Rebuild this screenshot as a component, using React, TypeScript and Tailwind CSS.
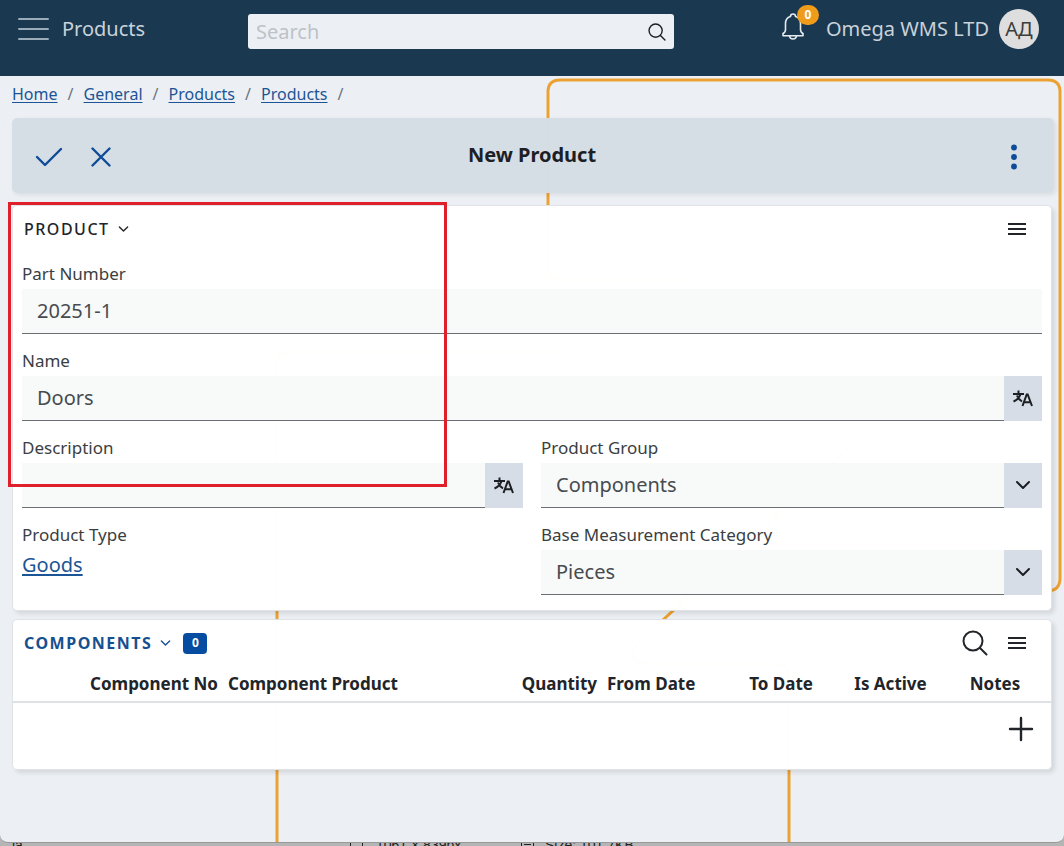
import React from "react";

const stroke = { fill: "none", stroke: "currentColor", strokeLinecap: "round", strokeLinejoin: "round" } as const;

function SearchIcon({ className }: { className: string }) {
  return (
    <svg viewBox="0 0 26 26" className={className} {...stroke} strokeWidth="2" aria-hidden="true">
      <circle cx="11" cy="11" r="9.5" />
      <path d="M18 18l6.5 6.5" />
    </svg>
  );
}

function Chevron({ className }: { className: string }) {
  return (
    <svg viewBox="0 0 16 10" className={className} {...stroke} strokeWidth="2" aria-hidden="true">
      <path d="M2 2l6 6 6-6" />
    </svg>
  );
}

function MenuLines() {
  return (
    <svg viewBox="0 0 18 12" className="h-3 w-[18px]" stroke="currentColor" strokeWidth="2" aria-hidden="true">
      <path d="M0 1h18M0 6h18M0 11h18" />
    </svg>
  );
}

function TranslateIcon() {
  return (
    <svg viewBox="0 0 20 17" className="h-[17px] w-5" fill="none" stroke="currentColor" strokeWidth="2" aria-hidden="true">
      <path d="M0 4h11M5.500 0.500v3.500M7.500 4c-1 3.500-3.500 6-7 7.500M4 5.500c1 2.500 2.500 4.500 5 6" />
      <path d="M9.500 16L13.700 4.500h1L19 16M11 12.200h6.500" />
    </svg>
  );
}

function Backdrop() {
  return (
    <svg className="pointer-events-none absolute left-0 top-0 h-full w-full text-[#eda133]" fill="none" stroke="currentColor" strokeWidth="3" aria-hidden="true">
      <path d="M700 204H560q-12 0-12-12V16q0-12 12-12h488q12 0 12 12v486q0 13-13 13H860" />
      <path d="M857 365L637 568q-12 20 12 20H777q12 0 12 12v600" />
      <path d="M560 276H289q-12 0-12 12v900" />
    </svg>
  );
}

const labelText = "block pt-px text-[17px] leading-[30px] text-[#3a3e42]";
const box = "flex h-[45px] bg-[#f8faf9]";
const control = "h-full w-full min-w-0 flex-1 appearance-none rounded-none border-b border-[#6b6f73] bg-transparent px-[15px] text-xl text-[#474b4f] outline-none";
const addon = "flex w-[38px] shrink-0 items-center justify-center bg-[#d6dde6] text-[#1c1f22]";

function TextField({ id, label, value, translate }: { id: string; label: string; value: string; translate?: boolean }) {
  return (
    <div>
      <label htmlFor={id} className={labelText}>{label}</label>
      <div className={box}>
        <input id={id} type="text" defaultValue={value} className={`pb-[2px] ${control}`} />
        {translate && (
          <button type="button" aria-label="Translate" className={addon}><TranslateIcon /></button>
        )}
      </div>
    </div>
  );
}

function SelectField({ id, label, value }: { id: string; label: string; value: string }) {
  return (
    <div>
      <label htmlFor={id} className={labelText}>{label}</label>
      <div className={box}>
        <select id={id} defaultValue={value} className={control}>
          <option>{value}</option>
        </select>
        <span className={`pb-[2px] ${addon}`}><Chevron className="h-[10px] w-4" /></span>
      </div>
    </div>
  );
}

const crumbs = ["Home", "General", "Products", "Products"];
const card = "rounded-[5px] border border-[#dfe2e6] bg-white/99 shadow-[3px_3px_4px_rgba(0,0,0,0.1)]";

export default function App() {
  return (
    <div className="flex min-h-screen flex-col bg-[#b5b5b5] font-['Noto_Sans',sans-serif] text-[#212529]">
      <div className="flex flex-1 flex-col overflow-hidden rounded-b-lg border-b border-[#999] bg-[#ecf0f4]">
        <header className="flex h-[76px] items-start bg-[#1a3850] text-[#c9d2da]">
          <div className="flex h-[58px] w-[248px] items-center gap-[13px] pl-[18px]">
            <button type="button" aria-label="Menu">
              <svg viewBox="0 0 31 24" className="h-6 w-[31px] text-[#9aabb9]" {...stroke} strokeWidth="2" aria-hidden="true">
                <path d="M1 2h29M1 12h29M1 22h29" />
              </svg>
            </button>
            <span className="text-xl">Products</span>
          </div>
          <div className="mt-[14px] flex h-[35px] w-2/5 items-center rounded-[3px] bg-[#ecf0f5] pl-2 pr-2">
            <input type="search" aria-label="Search" placeholder="Search" className="h-full min-w-0 flex-1 bg-transparent text-xl text-[#212529] outline-none placeholder:text-[#bcc2c8]" />
            <button type="button" aria-label="Run search" className="text-[#1c1f22]"><SearchIcon className="h-[18px] w-[18px]" /></button>
          </div>
          <div className="ml-auto flex h-[58px] items-center pr-[25px]">
            <button type="button" aria-label="Notifications" className="relative mb-[6px] mr-[22px] text-[#e6ebef]">
              <svg viewBox="0 0 22 27" className="h-[27px] w-[22px]" {...stroke} strokeWidth="1.600" aria-hidden="true">
                <path d="M8.500 3.500a2.500 2.500 0 0 1 5 0c3.500 1 5 3.500 5 7v6c0 2 .8 3.200 2.500 4v2.300H1v-2.300c1.700-.8 2.500-2 2.500-4v-6c0-3.500 1.500-6 5-7z" />
                <path d="M7.500 23c.5 4 6.500 4 7 0" />
              </svg>
              <span className="absolute -top-2 left-[15px] flex h-5 w-[22px] items-center justify-center rounded-full bg-[#f09c1b] text-xs font-bold text-white">0</span>
            </button>
            <span className="mr-[10px] text-xl">Omega WMS LTD</span>
            <span className="flex h-10 w-10 items-center justify-center rounded-full bg-[#dedede] text-xl text-[#3c3c3c]">АД</span>
          </div>
        </header>

        <div className="relative flex-1">
          <Backdrop />
          <main className="relative px-3 pb-6">
            <nav aria-label="Breadcrumb" className="flex h-[42px] items-start pt-[6px] text-base text-[#1c5596]">
              {crumbs.map((c, i) => (
                <span key={i} className="flex">
                  <a href="#" className="underline underline-offset-2">{c}</a>
                  <span className="w-[26px] text-center text-[#6c757d]">/</span>
                </span>
              ))}
            </nav>

            <div className="-mr-[2px] flex h-[75px] items-center rounded-[5px] bg-[#d6dee5]/99 text-[#0d4c97] shadow-[2px_2px_4px_rgba(0,0,0,0.08)]">
              <div className="flex flex-1 items-center gap-[28px] pl-[23px] pt-[2px]">
                <button type="button" aria-label="Save">
                  <svg viewBox="0 0 28 20" className="h-5 w-7" {...stroke} strokeWidth="2.400" aria-hidden="true"><path d="M2 10l8 8L26 2" /></svg>
                </button>
                <button type="button" aria-label="Cancel">
                  <svg viewBox="0 0 20 20" className="h-5 w-5" {...stroke} strokeWidth="2.400" aria-hidden="true"><path d="M1.500 1.500l17 17M18.500 1.500l-17 17" /></svg>
                </button>
              </div>
              <h1 className="pb-[2px] pl-3 text-xl font-bold text-[#1c2024]">New Product</h1>
              <div className="flex flex-1 justify-end pr-[37px] pt-[2px]">
                <button type="button" aria-label="More actions">
                  <svg viewBox="0 0 6 26" className="h-[26px] w-[6px]" fill="currentColor" aria-hidden="true">
                    <circle cx="3" cy="3.500" r="2.900" /><circle cx="3" cy="13" r="2.900" /><circle cx="3" cy="22.500" r="2.900" />
                  </svg>
                </button>
              </div>
            </div>

            <section className={`relative mt-3 px-[9px] pb-[15px] ${card}`}>
              <div className="flex h-[52px] items-center justify-between pb-[6px] pl-[2px] pr-4">
                <button type="button" className="flex items-center gap-2 text-base font-medium tracking-[1.5px]">
                  PRODUCT <Chevron className="h-2 w-[11px]" />
                </button>
                <button type="button" aria-label="Product menu"><MenuLines /></button>
              </div>
              <div className="flex flex-col gap-[11px]">
                <TextField id="part" label="Part Number" value="20251-1" />
                <TextField id="name" label="Name" value="Doors" translate />
                <div className="grid grid-cols-2 gap-x-[18px] gap-y-[11px]">
                  <TextField id="description" label="Description" value="" translate />
                  <SelectField id="group" label="Product Group" value="Components" />
                  <div>
                    <span className={labelText}>Product Type</span>
                    <a href="#" className="text-xl leading-[30px] text-[#1c5596] underline underline-offset-2">Goods</a>
                  </div>
                  <SelectField id="category" label="Base Measurement Category" value="Pieces" />
                </div>
              </div>
              <div className="pointer-events-none absolute -left-[5px] -top-1 h-[285px] w-[439px] border-3 border-[#df1f29]" />
            </section>

            <section className={`mt-2 ${card}`}>
              <div className="flex h-[46px] items-center justify-between pl-[11px] pr-[25px]">
                <button type="button" className="flex items-center gap-2 text-base font-bold tracking-[1.5px] text-[#17508f]">
                  COMPONENTS <Chevron className="h-2 w-[11px]" />
                  <span className="ml-1 flex h-[21px] w-6 items-center justify-center rounded bg-[#064da2] text-xs tracking-normal text-white">0</span>
                </button>
                <div className="flex items-center gap-5">
                  <button type="button" aria-label="Search components"><SearchIcon className="h-[26px] w-[26px]" /></button>
                  <button type="button" aria-label="Components menu"><MenuLines /></button>
                </div>
              </div>
              <table className="w-full table-fixed text-[17px]">
                <thead>
                  <tr className="h-9 whitespace-nowrap border-b-2 border-[#dee2e6] align-middle">
                    <th className="w-[210px] pr-[5px] text-right font-bold">Component No</th>
                    <th className="pl-[5px] text-left font-bold">Component Product</th>
                    <th className="w-[125px] pr-[5px] text-right font-bold">Quantity</th>
                    <th className="w-[112px] pl-[5px] text-left font-bold">From Date</th>
                    <th className="w-[104px] pr-[5px] text-right font-bold">To Date</th>
                    <th className="w-[145px] text-center font-bold">Is Active</th>
                    <th className="w-[88px] pr-6 text-center font-bold">Notes</th>
                  </tr>
                </thead>
                <tbody>
                  <tr className="h-[67px] align-top">
                    <td colSpan={7} className="pr-[17px] pt-[13px] text-right">
                      <button type="button" aria-label="Add component">
                        <svg viewBox="0 0 26 26" className="h-[26px] w-[26px]" {...stroke} strokeWidth="2.400" aria-hidden="true"><path d="M13 2v22M2 13h22" /></svg>
                      </button>
                    </td>
                  </tr>
                </tbody>
              </table>
            </section>
          </main>
        </div>
      </div>
      <footer className="flex h-[3px] items-center overflow-hidden font-['Liberation_Sans',sans-serif] text-sm leading-none text-[#222]">
        <span className="w-[350px] pl-3">la</span>
        <svg viewBox="0 0 14 3" className="h-[3px] w-[14px]" stroke="currentColor" fill="none" aria-hidden="true"><path d="M.5 0v3M12.500 0v3" /></svg>
        <span className="w-[157px] pl-3">1061 × 839px</span>
        <svg viewBox="0 0 14 3" className="h-[3px] w-[14px]" stroke="currentColor" fill="none" aria-hidden="true"><path d="M.5 0v3M12.500 0v3M3 1.500h7" /></svg>
        <span className="pl-[10px]">Size: 101.7KB</span>
      </footer>
    </div>
  );
}
